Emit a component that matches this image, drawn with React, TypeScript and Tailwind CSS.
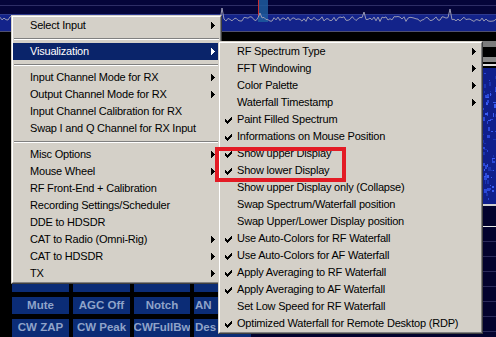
import React from 'react';

type Item = { label: string; arrow?: boolean; check?: boolean; active?: boolean } | 'sep';

const mainItems: Item[] = [
  { label: 'Select Input', arrow: true },
  'sep',
  { label: 'Visualization', arrow: true, active: true },
  'sep',
  { label: 'Input Channel Mode for RX', arrow: true },
  { label: 'Output Channel Mode for RX', arrow: true },
  { label: 'Input Channel Calibration for RX' },
  { label: 'Swap I and Q Channel for RX Input' },
  'sep',
  { label: 'Misc Options', arrow: true },
  { label: 'Mouse Wheel', arrow: true },
  { label: 'RF Front-End + Calibration' },
  { label: 'Recording Settings/Scheduler' },
  { label: 'DDE to HDSDR' },
  { label: 'CAT to Radio (Omni-Rig)', arrow: true },
  { label: 'CAT to HDSDR', arrow: true },
  { label: 'TX', arrow: true },
];

const subItems: Item[] = [
  { label: 'RF Spectrum Type', arrow: true },
  { label: 'FFT Windowing', arrow: true },
  { label: 'Color Palette', arrow: true },
  { label: 'Waterfall Timestamp', arrow: true },
  { label: 'Paint Filled Spectrum', check: true },
  { label: 'Informations on Mouse Position', check: true },
  { label: 'Show upper Display', check: true },
  { label: 'Show lower Display', check: true },
  { label: 'Show upper Display only (Collapse)' },
  { label: 'Swap Spectrum/Waterfall position' },
  { label: 'Swap Upper/Lower Display position' },
  { label: 'Use Auto-Colors for RF Waterfall', check: true },
  { label: 'Use Auto-Colors for AF Waterfall', check: true },
  { label: 'Apply Averaging to RF Waterfall', check: true },
  { label: 'Apply Averaging to AF Waterfall', check: true },
  { label: 'Set Low Speed for RF Waterfall' },
  { label: 'Optimized Waterfall for Remote Desktop (RDP)', check: true },
];

function rng(seed: number) {
  let s = seed;
  return () => {
    s = (s * 1103515245 + 12345) % 2147483648;
    return s / 2147483648;
  };
}

const r = rng(7);
const tracePts: string = (() => {
  const pts: string[] = [];
  for (let x = 0; x <= 496; x += 2) {
    let y = 19 + (r() - 0.5) * 5;
    if (Math.abs(x - 222) < 2) y = 8;
    if (Math.abs(x - 260) < 2) y = 13;
    if (Math.abs(x - 364) < 2) y = 12;
    if (Math.abs(x - 450) < 2) y = 9;
    if (x < 20) y = 18 + (r() - 0.5) * 4;
    pts.push(`${x},${y.toFixed(1)}`);
  }
  return pts.join(' ');
})();

const r2 = rng(13);
const noise = Array.from({ length: 160 }, () => ({
  x: Math.floor(r2() * 24),
  y: Math.floor(r2() * 140),
  w: 1 + Math.floor(r2() * 3),
  h: 1 + Math.floor(r2() * 4),
  c: ['#2a48d8', '#1a34b0', '#3a5cf0', '#0e1f90'][Math.floor(r2() * 4)],
}));

function Check() {
  const rows = ['......x', '.....xx', 'x...xxx', 'xx.xxx.', 'xxxxx..', '.xxx...', '..x....'];
  return (
    <svg width="7" height="7" viewBox="0 0 7 7" shapeRendering="crispEdges">
      {rows.map((row, y) =>
        row.split('').map((c, x) => (c === 'x' ? <rect key={`${x}-${y}`} x={x} y={y} width="1" height="1" fill="#000" /> : null))
      )}
    </svg>
  );
}

function Arrow({ color }: { color: string }) {
  return (
    <svg width="4" height="7" viewBox="0 0 4 7" shapeRendering="crispEdges">
      <rect x="0" y="0" width="1" height="7" fill={color} />
      <rect x="1" y="1" width="1" height="5" fill={color} />
      <rect x="2" y="2" width="1" height="3" fill={color} />
      <rect x="3" y="3" width="1" height="1" fill={color} />
    </svg>
  );
}

function Menu({ items }: { items: Item[] }) {
  return (
    <div className="border border-t-[#d4d0c8] border-l-[#d4d0c8] border-b-[#404040] border-r-[#404040] bg-[#d4d0c8]">
      <div className="border border-t-white border-l-white border-b-[#808080] border-r-[#808080] flex flex-col">
        {items.map((it, i) =>
          it === 'sep' ? (
            <div key={i} className="h-[9px] flex flex-col justify-center px-[1px]">
              <div className="h-[1px] bg-[#808080]" />
              <div className="h-[1px] bg-white" />
            </div>
          ) : (
            <div
              key={i}
              className={`h-[17px] flex items-center pl-[5px] pr-[5px] whitespace-nowrap ${
                it.active ? 'bg-[#0a246a] text-white' : 'text-black'
              }`}
            >
              <div className="w-[12px] flex items-center pt-[1px]">{it.check ? <Check /> : null}</div>
              <span className="tracking-[-0.2px] leading-none">{it.label}</span>
              {it.arrow ? (
                <div className="ml-auto flex items-center">
                  <Arrow color={it.active ? '#fff' : '#000'} />
                </div>
              ) : null}
            </div>
          )
        )}
      </div>
    </div>
  );
}

function Btn({ label, left }: { label: string; left?: boolean }) {
  return (
    <div
      className={`bg-[#0b2c76] text-[#8fa3c9] font-bold text-[11.5px] flex items-center whitespace-nowrap overflow-hidden leading-none ${
        left ? 'justify-start pl-[1px]' : 'justify-center'
      }`}
    >
      {label}
    </div>
  );
}

export default function App() {
  return (
    <div className="relative w-[496px] h-[337px] overflow-hidden bg-black font-['Liberation_Sans',Arial,sans-serif] text-[11px]">
      {/* top spectrum */}
      <svg width="496" height="32" className="block">
        <rect x="0" y="0" width="496" height="32" fill="#05053a" />
        <line x1="0" y1="5.5" x2="496" y2="5.5" stroke="#2e2e66" strokeWidth="1" />
        <rect x="0" y="14" width="496" height="17" fill="#13238a" />
        <line x1="0" y1="14.5" x2="496" y2="14.5" stroke="#2e3a8e" strokeWidth="1" />
        <rect x="258" y="0" width="10" height="22" fill="#1f5c9e" opacity="0.85" />
        <line x1="258.5" y1="0" x2="258.5" y2="17" stroke="#c83030" strokeWidth="1" />
        <polyline points={tracePts} fill="none" stroke="#9a9ab4" strokeWidth="1" />
        <line x1="0" y1="31.5" x2="496" y2="31.5" stroke="#505070" strokeWidth="1" />
      </svg>

      {/* body */}
      <div className="flex h-[305px]">
        <div className="w-[251px] flex flex-col justify-end pl-[12px]">
          <div className="grid grid-cols-[57px_57px_56px_57px] grid-rows-[17px_17px_18px] gap-x-[4px] gap-y-[5px]">
            <Btn label="" />
            <Btn label="" />
            <Btn label="" />
            <Btn label="" />
            <Btn label="Mute" />
            <Btn label="AGC Off" />
            <Btn label="Notch" />
            <Btn label="AN" left />
            <Btn label="CW ZAP" />
            <Btn label="CW Peak" />
            <Btn label="CWFullBw" />
            <Btn label="Des" left />
          </div>
        </div>
        <div className="flex-1 flex flex-col">
          <div className="h-[9px] bg-black" />
          <div className="h-[6px] bg-[#7c7c7c]" />
          <div className="h-[10px] bg-black" />
          <div className="h-[5px] bg-[#8a8a8a]" />
          <div className="h-[2px] bg-black" />
          <div className="h-[2px] bg-[#e0e0e0]" />
          <div className="h-[2px] bg-black" />
          <div className="h-[136px] bg-[#0f1f8c] flex justify-end overflow-hidden">
            <svg width="24" height="136">
              {noise.map((n, i) => (
                <rect key={i} x={n.x} y={n.y} width={n.w} height={n.h} fill={n.c} />
              ))}
            </svg>
          </div>
          <div className="h-[2px] bg-[#d0d0d0]" />
          <div className="h-[20px] bg-[#03032e]" />
          <div className="h-[1px] bg-[#e8e8e8]" />
          <div className="flex-1 bg-[#03032e] flex flex-col">
            {[0, 1, 2, 3, 4, 5, 6].map((i) => (
              <div key={i} className="h-[15px] border-b border-[#2a2a5a]" />
            ))}
          </div>
        </div>
      </div>

      {/* main context menu */}
      <div className="absolute left-[11px] top-[15px] w-[211px]">
        <Menu items={mainItems} />
      </div>

      {/* submenu */}
      <div className="absolute left-[218px] top-[41px] w-[265px]">
        <Menu items={subItems} />
      </div>

      {/* red highlight box */}
      <div className="absolute left-[215px] top-[147px] w-[131px] h-[35px] border-[4px] border-[#e31b25]" />
    </div>
  );
}
